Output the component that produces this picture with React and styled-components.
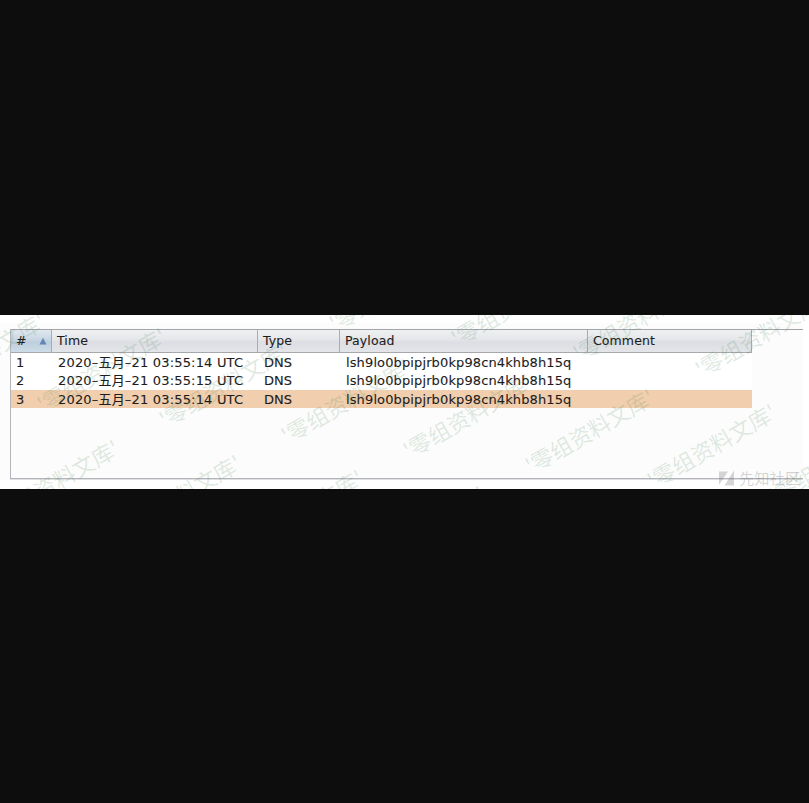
import React from "react";
import styled, { createGlobalStyle } from "styled-components";

const GlobalStyle = createGlobalStyle`
  * { box-sizing: border-box; }
  body { margin: 0; background: #0d0d0d; overflow: hidden; }
`;

const Stage = styled.div`
  width: 809px;
  height: 803px;
  padding-top: 315px;
  background: #0d0d0d;
  font-family: "DejaVu Sans", "Noto Sans CJK SC", sans-serif;
`;

const Panel = styled.main`
  position: relative;
  height: 174px;
  padding: 8px 0 9px;
  overflow: hidden;
  background: #fff;
`;

const PanelBody = styled.div`
  height: 157px;
  margin-right: 6px;
  padding: 6px 0 1px 10px;
  background: #fcfcfc;
`;

const TableFrame = styled.section`
  height: 150px;
  border: solid #b3b5bb;
  border-width: 1px 0 1px 1px;
  border-top-color: #a2a4a9;
  box-shadow: 0 1px 0 #dfe0e3;
`;

const Line = styled.div`
  display: grid;
  grid-template-columns: 41px 206px 82px 248px 164px;
  width: 741px;
`;

const HeaderLine = styled(Line)`
  height: 23px;
  border-bottom: 1px solid #a6a8ac;
  background: linear-gradient(#eff0f2, #e5e7ea 42%, #dcdee3 55%, #e3e5e9);
`;

const HeaderCell = styled.div`
  display: flex;
  align-items: center;
  justify-content: space-between;
  padding: 0 4px 0 5px;
  border-right: 1px solid #a9adb3;
  background: ${(p) => (p.$sorted ? "linear-gradient(#e0e8ef, #c8d6e2 45%, #bdcedd 55%, #cddce8)" : "none")};
  color: #1c1c1c;
  font-size: 12.5px;
  line-height: 22px;
  letter-spacing: 0.1px;
  -webkit-text-stroke: 0.1px #1c1c1c;
`;

const Row = styled(Line)`
  height: ${(p) => p.$height}px;
  background: ${(p) => (p.$selected ? "#f0ceae" : "#fff")};
`;

const Cell = styled.div`
  padding-left: ${(p) => p.$inset || 6}px;
  color: #1c1c1c;
  font-size: 13px;
  line-height: 19px;
  letter-spacing: ${(p) => p.$track || 0}px;
  -webkit-text-stroke: 0.1px #1c1c1c;
  white-space: nowrap;
`;

const Watermark = styled.span`
  position: absolute;
  left: ${(p) => p.$x}px;
  top: ${(p) => p.$y}px;
  transform: translate(-50%, -50%) rotate(-30deg);
  color: rgba(65, 125, 75, 0.17);
  font: 22px/30px "Noto Sans CJK SC", sans-serif;
  white-space: nowrap;
  pointer-events: none;
`;

const Brand = styled.div`
  position: absolute;
  left: 719px;
  top: 153px;
  display: flex;
  align-items: center;
  gap: 4px;
  height: 18px;
  color: rgba(90, 90, 95, 0.25);
  font: 15.3px/18px "Noto Sans CJK SC", sans-serif;
  white-space: nowrap;
`;

const BrandMark = styled.svg`
  flex: none;
  margin-top: 2px;
`;

const columns = ["Time", "Type", "Payload", "Comment"];

const records = [
  { id: 1, time: "2020–五月–21 03:55:14 UTC", height: 18 },
  { id: 2, time: "2020–五月–21 03:55:15 UTC", height: 19 },
  { id: 3, time: "2020–五月–21 03:55:14 UTC", height: 18, selected: true },
];

const chain = (x, y, count) =>
  Array.from({ length: count }, (_, i) => [x + i * 121.9, y + i * 15.2]);

const marks = [
  ...chain(-20.5, 39, 8),
  ...chain(271, -42.3, 5),
  ...chain(54, 166, 4),
];

export default function App() {
  return (
    <>
      <GlobalStyle />
      <Stage>
        <Panel>
          <PanelBody>
            <TableFrame>
              <HeaderLine>
                <HeaderCell $sorted>
                  #
                  <svg width="8" height="8" viewBox="0 0 8 8">
                    <path d="M4 .7 7.5 7.5H.5Z" fill="#6386b5" />
                  </svg>
                </HeaderCell>
                {columns.map((name) => (
                  <HeaderCell key={name}>{name}</HeaderCell>
                ))}
              </HeaderLine>
              {records.map((r) => (
                <Row key={r.id} $height={r.height} $selected={r.selected}>
                  <Cell $inset={5}>{r.id}</Cell>
                  <Cell $track={0.18}>{r.time}</Cell>
                  <Cell>DNS</Cell>
                  <Cell $track={0.12}>lsh9lo0bpipjrb0kp98cn4khb8h15q</Cell>
                  <Cell />
                </Row>
              ))}
            </TableFrame>
          </PanelBody>
          {marks.map(([x, y]) => (
            <Watermark key={`${x},${y}`} $x={x} $y={y}>'零组资料文库'</Watermark>
          ))}
          <Brand>
            <BrandMark width="16" height="16" viewBox="0 0 16 16" fill="currentColor">
              <path d="M0 1.500h9L0 15ZM15 .5v15H5.500Z" />
            </BrandMark>
            先知社区
          </Brand>
        </Panel>
      </Stage>
    </>
  );
}
